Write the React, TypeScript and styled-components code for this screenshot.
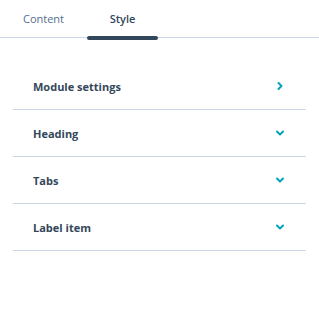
import React from "react";
import styled, { createGlobalStyle } from "styled-components";

const GlobalStyle = createGlobalStyle`
  body {
    margin: 0;
    background: #fff;
    font-family: "Open Sans", "Liberation Sans", sans-serif;
    color: #33475b;
  }
`;

const Panel = styled.div`
  width: 319px;
  height: 331px;
  background: #fff;
`;

const TabBar = styled.div`
  display: flex;
  gap: 8px;
  padding-left: 8px;
  height: 38px;
  border-bottom: 1px solid #cbd6e2;
  box-sizing: border-box;
`;

const Tab = styled.button<{ $active?: boolean }>`
  position: relative;
  width: 71px;
  height: 38px;
  border: 0;
  background: none;
  padding: 0 0 2px;
  font-family: inherit;
  font-size: 11px;
  font-weight: ${({ $active }) => ($active ? 600 : 400)};
  color: ${({ $active }) => ($active ? "#33475b" : "#516f90")};
  cursor: pointer;

  &::after {
    content: "";
    display: ${({ $active }) => ($active ? "block" : "none")};
    position: absolute;
    left: 0;
    right: 0;
    bottom: -2px;
    height: 4px;
    border-radius: 2px;
    background: #33475b;
  }
`;

const List = styled.div`
  margin: 25px 13px 0;
`;

const Row = styled.div`
  display: flex;
  align-items: center;
  justify-content: space-between;
  height: 46px;
  padding: 0 20px;
  border-bottom: 1px solid #cbd6e2;
`;

const Label = styled.span`
  font-size: 11px;
  font-weight: 700;
  color: #33475b;
`;

const Chevron = ({ dir }: { dir: "right" | "down" }) => (
  <svg width="12" height="12" viewBox="0 0 12 12" fill="none">
    <path
      d={dir === "right" ? "M4.5 3 L7.5 6 L4.5 9" : "M3 4.5 L6 7.5 L9 4.5"}
      stroke="#00a4bd"
      strokeWidth="2"
      strokeLinecap="round"
      strokeLinejoin="round"
    />
  </svg>
);

const sections = [
  { name: "Module settings", dir: "right" as const },
  { name: "Heading", dir: "down" as const },
  { name: "Tabs", dir: "down" as const },
  { name: "Label item", dir: "down" as const },
];

export default function App() {
  return (
    <>
      <GlobalStyle />
      <Panel>
        <TabBar>
          <Tab>Content</Tab>
          <Tab $active>Style</Tab>
        </TabBar>
        <List>
          {sections.map((s) => (
            <Row key={s.name}>
              <Label>{s.name}</Label>
              <Chevron dir={s.dir} />
            </Row>
          ))}
        </List>
      </Panel>
    </>
  );
}
